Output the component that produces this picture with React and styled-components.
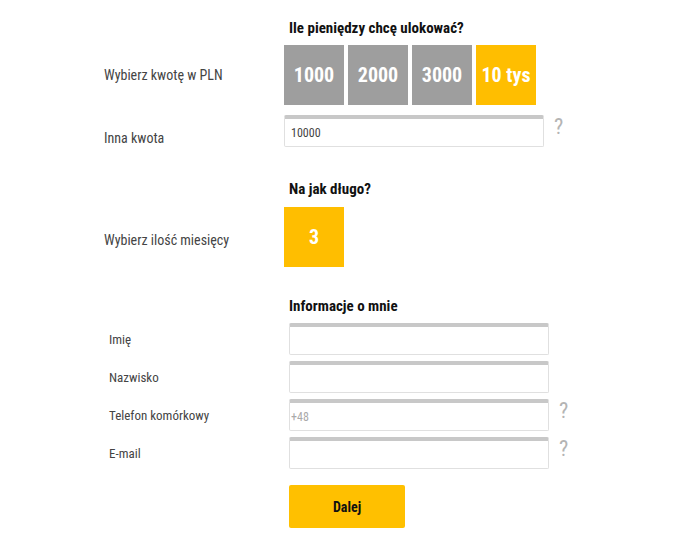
import React from 'react';
import styled, { createGlobalStyle } from 'styled-components';

const GlobalStyle = createGlobalStyle`
    body {
        margin:0;
        background:#fff;
        font-family:Roboto, "Liberation Sans", sans-serif;
        font-stretch:80%;
        color:#444;
    }
`;

const Page = styled.div`
    padding-top:18px;
    width:695px;
`;

const Section = styled.div`
    padding-left:${props => props.indent}px;
    display:flex;
    flex-direction:column;
`;

const Row = styled.div`
    display:flex;
    align-items:center;
    margin-top:${props => props.top || 0}px;
`;

const Label = styled.div`
    width:180px;
    flex-shrink:0;
    font-size:${props => props.size || 13}px;
    color:#444;
    padding-top:${props => props.shift || 0}px;
`;

const Heading = styled.h3`
    margin:0 0 0 ${props => props.offset || 0}px;
    font-size:15px;
    line-height:20px;
    font-weight:700;
    color:#111;
`;

const Tiles = styled.div`
    display:flex;
    gap:4px;
`;

const Tile = styled.button`
    width:60px;
    height:60px;
    border:none;
    padding:0;
    background:${props => (props.active ? '#ffbe00' : '#9e9e9e')};
    color:#fff;
    font-family:inherit;
    font-stretch:80%;
    font-size:20px;
    font-weight:700;
    cursor:pointer;
`;

const Field = styled.input`
    box-sizing:border-box;
    width:260px;
    height:32px;
    margin:0;
    border:1px solid #e0e0e0;
    border-top:4px solid #c8c8c8;
    border-radius:2px;
    padding:0 6px 0 ${props => props.pad || 6}px;
    font-family:inherit;
    font-stretch:80%;
    font-size:12px;
    color:#444;
    outline:none;
    &::placeholder {
        color:#aaa;
    }
`;

const Help = styled.span`
    margin-left:10px;
    font-size:22px;
    color:#b4b4b4;
    line-height:1;
    margin-top:-8px;
`;

const Spacer = styled.div`
    width:180px;
    flex-shrink:0;
`;

const Submit = styled.button`
    width:116px;
    height:43px;
    border:none;
    border-radius:2px;
    background:#ffc000;
    color:#111;
    font-family:inherit;
    font-stretch:80%;
    font-size:14px;
    font-weight:700;
    cursor:pointer;
`;

const amounts = ['1000', '2000', '3000', '10 tys'];

const personal = [
    { label: 'Imię', help: false },
    { label: 'Nazwisko', help: false },
    { label: 'Telefon komórkowy', placeholder: '+48', help: true },
    { label: 'E-mail', help: true },
];

export default function App() {
    return (
        <Page>
            <GlobalStyle />
            <Section indent={104}>
                <Row>
                    <Spacer />
                    <Heading offset={5}>Ile pieniędzy chcę ulokować?</Heading>
                </Row>
                <Row top={7}>
                    <Label size={14}>Wybierz kwotę w PLN</Label>
                    <Tiles>
                        {amounts.map(a => (
                            <Tile key={a} active={a === '10 tys'}>{a}</Tile>
                        ))}
                    </Tiles>
                </Row>
                <Row top={10}>
                    <Label size={14} shift={13}>Inna kwota</Label>
                    <Field defaultValue="10000" />
                    <Help>?</Help>
                </Row>
                <Row top={32}>
                    <Spacer />
                    <Heading offset={5}>Na jak długo?</Heading>
                </Row>
                <Row top={8}>
                    <Label size={14} shift={6}>Wybierz ilość miesięcy</Label>
                    <Tiles>
                        <Tile active>3</Tile>
                    </Tiles>
                </Row>
            </Section>
            <Section indent={109}>
                <Row top={29}>
                    <Spacer />
                    <Heading>Informacje o mnie</Heading>
                </Row>
                {personal.map((p, i) => (
                    <Row key={p.label} top={i === 0 ? 7 : 6}>
                        <Label shift={1}>{p.label}</Label>
                        <Field placeholder={p.placeholder} pad={p.placeholder ? 1 : 6} />
                        {p.help && <Help>?</Help>}
                    </Row>
                ))}
                <Row top={16}>
                    <Spacer />
                    <Submit>Dalej</Submit>
                </Row>
            </Section>
        </Page>
    );
}
